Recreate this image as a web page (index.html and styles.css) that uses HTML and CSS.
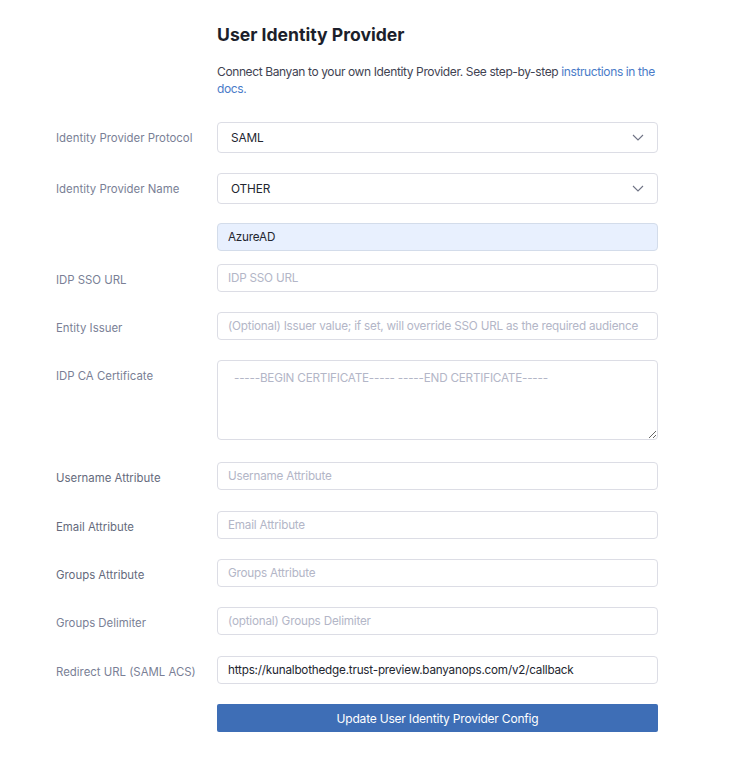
FILE: index.html
```html
<!DOCTYPE html>
<html lang="en">
<head>
<meta charset="utf-8">
<title>User Identity Provider</title>
<link rel="stylesheet" href="styles.css">
</head>
<body>
<div class="page">
  <div class="header">
    <h1 class="title">User Identity Provider</h1>
    <p class="desc">Connect Banyan to your own Identity Provider. See step-by-step <a class="link" href="#">instructions in the docs.</a></p>
  </div>
  <form class="form">
    <div class="row">
      <label class="label">Identity Provider Protocol</label>
      <div class="control">
        <div class="select"><span>SAML</span>
          <svg class="chev" width="12" height="7" viewBox="0 0 12 7"><path d="M1 1l5 5 5-5" fill="none" stroke="#6f7385" stroke-width="1.1"/></svg>
        </div>
      </div>
    </div>
    <div class="row">
      <label class="label">Identity Provider Name</label>
      <div class="control stack">
        <div class="select"><span>OTHER</span>
          <svg class="chev" width="12" height="7" viewBox="0 0 12 7"><path d="M1 1l5 5 5-5" fill="none" stroke="#6f7385" stroke-width="1.1"/></svg>
        </div>
        <input class="input filled auto" type="text" value="AzureAD">
      </div>
    </div>
    <div class="row after-auto">
      <label class="label">IDP SSO URL</label>
      <div class="control"><input class="input" type="text" placeholder="IDP SSO URL"></div>
    </div>
    <div class="row">
      <label class="label">Entity Issuer</label>
      <div class="control"><input class="input" type="text" placeholder="(Optional) Issuer value; if set, will override SSO URL as the required audience"></div>
    </div>
    <div class="row">
      <label class="label">IDP CA Certificate</label>
      <div class="control"><textarea class="textarea" placeholder="-----BEGIN CERTIFICATE----- -----END CERTIFICATE-----"></textarea></div>
    </div>
    <div class="row spaced">
      <label class="label dark">Username Attribute</label>
      <div class="control"><input class="input" type="text" placeholder="Username Attribute"></div>
    </div>
    <div class="row spaced-1">
      <label class="label dark">Email Attribute</label>
      <div class="control"><input class="input" type="text" placeholder="Email Attribute"></div>
    </div>
    <div class="row">
      <label class="label dark">Groups Attribute</label>
      <div class="control"><input class="input" type="text" placeholder="Groups Attribute"></div>
    </div>
    <div class="row">
      <label class="label">Groups Delimiter</label>
      <div class="control"><input class="input" type="text" placeholder="(optional) Groups Delimiter"></div>
    </div>
    <div class="row spaced-1">
      <label class="label">Redirect URL (SAML ACS)</label>
      <div class="control"><input class="input filled" type="text" value="https://kunalbothedge.trust-preview.banyanops.com/v2/callback"></div>
    </div>
    <div class="row">
      <span class="label"></span>
      <div class="control"><button class="button" type="button">Update User Identity Provider Config</button></div>
    </div>
  </form>
</div>
</body>
</html>
```

FILE: styles.css
```css
* { box-sizing: border-box; }
html, body { margin: 0; padding: 0; background: #ffffff; }
body {
  font-family: Inter, "Noto Sans", sans-serif;
  color: #22252f;
}
.page {
  padding: 24px 0 0 56px;
  width: 658px;
}
.header {
  margin-left: 161px;
}
.title {
  margin: 0;
  font-size: 17.6px;
  line-height: 22px;
  font-weight: 700;
  color: #1c1f2b;
}
.desc {
  margin: 17px 0 0 0;
  font-size: 12px;
  line-height: 17px;
  letter-spacing: -0.38px;
  color: #3f4352;
}
.link { color: #4a7bc8; text-decoration: none; }
.form {
  margin-top: 25px;
  display: flex;
  flex-direction: column;
}
.row {
  display: flex;
  align-items: flex-start;
  margin-top: 20px;
}
.row:first-child { margin-top: 0; }
.row.after-auto { margin-top: 13px; }
.row.spaced { margin-top: 22px; }
.row.spaced-1 { margin-top: 21px; }
.label {
  width: 161px;
  flex: none;
  font-size: 11.4px;
  line-height: 14px;
  padding-top: 9px;
  color: #7a7f96;
}
.label.dark { color: #656a7c; }
.control {
  width: 441px;
  flex: none;
}
.stack { display: flex; flex-direction: column; gap: 19px; }
.select {
  height: 31px;
  border: 1px solid #dcdde5;
  border-radius: 4px;
  display: flex;
  align-items: center;
  justify-content: space-between;
  padding: 0 13px 0 13px;
  font-size: 11.8px;
  letter-spacing: -0.1px;
  color: #23262f;
}
.chev { display: block; }
.input {
  display: block;
  width: 100%;
  height: 28px;
  border: 1px solid #dcdde5;
  border-radius: 4px;
  padding: 0 10px;
  font-family: Inter, "Noto Sans", sans-serif;
  font-size: 11.7px;
  letter-spacing: -0.2px;
  color: #23262f;
  background: #fff;
  outline: none;
}
.input.auto { background: #e8f0fe; border-color: #d3dcea; }
.input::placeholder, .textarea::placeholder { color: #b3b6c7; opacity: 1; }
.textarea {
  display: block;
  width: 100%;
  height: 80px;
  border: 1px solid #dcdde5;
  border-radius: 4px;
  padding: 10px 16px 6px 16px;
  font-family: Inter, "Noto Sans", sans-serif;
  font-size: 11.7px;
  letter-spacing: -0.2px;
  line-height: 14px;
  resize: vertical;
  outline: none;
}
.button {
  display: block;
  width: 100%;
  height: 28px;
  border: none;
  border-radius: 2px;
  background: #3e6eb6;
  color: #ffffff;
  font-family: Inter, "Noto Sans", sans-serif;
  font-size: 12px;
  letter-spacing: -0.2px;
  cursor: pointer;
}
```
